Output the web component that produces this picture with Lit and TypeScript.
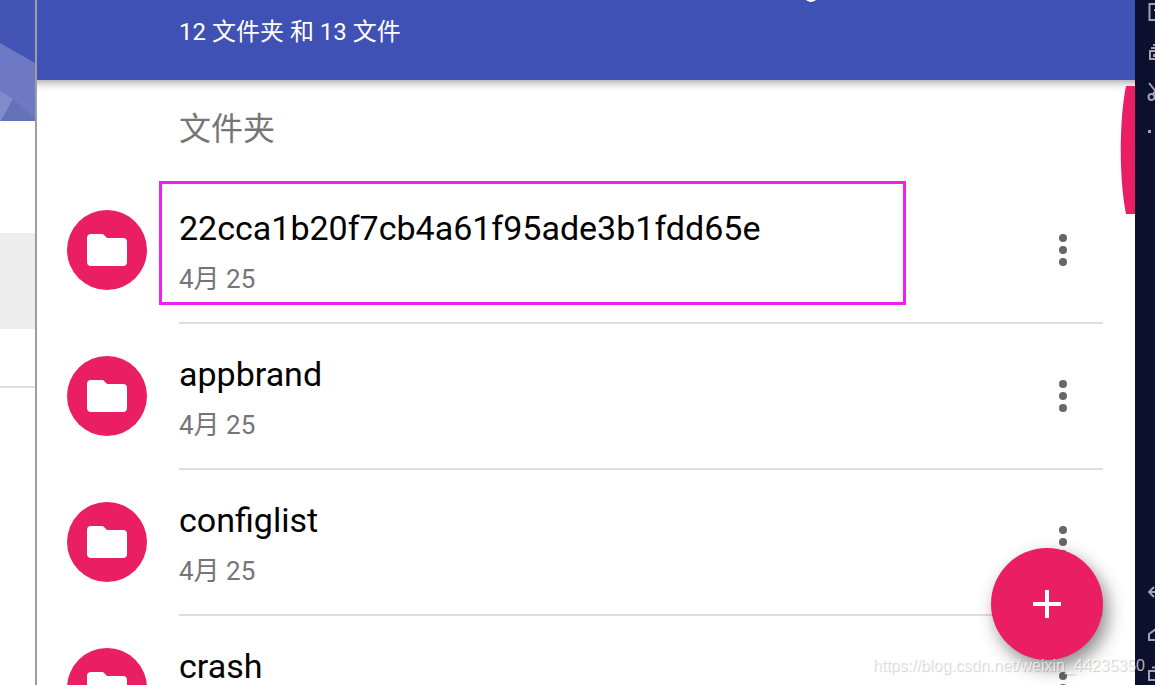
import { LitElement, html, css, svg } from "lit";
import { customElement, property } from "lit/decorators.js";

interface Folder {
  name: string;
  date: string;
  marked?: boolean;
}

const folders: Folder[] = [
  { name: "22cca1b20f7cb4a61f95ade3b1fdd65e", date: "4月 25", marked: true },
  { name: "appbrand", date: "4月 25" },
  { name: "configlist", date: "4月 25" },
  { name: "crash", date: "4月 25" },
];

@customElement("folder-row")
export class FolderRow extends LitElement {
  @property({ attribute: false }) folder!: Folder;

  static styles = css`
    :host {
      display: block;
    }
    .row {
      position: relative;
      display: flex;
      align-items: flex-start;
      padding: 0 32px 0 30px;
    }
    .badge {
      flex: none;
      width: 80px;
      height: 80px;
      margin: 32px 32px 0 0;
      border-radius: 50%;
      background: #e91e63;
    }
    .badge svg,
    .more svg {
      display: block;
    }
    .body {
      flex: 1;
      min-width: 0;
      display: flex;
      border-bottom: 2px solid #dfdfdf;
    }
    .text {
      flex: 1;
      min-width: 0;
      padding: 28px 0 24px;
    }
    .name {
      font-size: 34px;
      line-height: 44px;
      color: #000;
    }
    .date {
      margin-top: 10px;
      font-size: 26px;
      line-height: 38px;
      color: #757575;
    }
    .more {
      flex: none;
      width: 80px;
      padding: 0;
      border: 0;
      background: none;
    }
    .mark {
      position: absolute;
      left: 122px;
      top: 3px;
      width: 68%;
      height: 124px;
      box-sizing: border-box;
      border: 3px solid #f01ef0;
    }
  `;

  render() {
    return html`<div class="row">
      <span class="badge">
        <svg viewBox="0 0 80 80" width="80" height="80" aria-hidden="true">
          <path fill="#fff" d="M36 24H24a4 4 0 0 0-4 4v24a4 4 0 0 0 4 4h32a4 4 0 0 0 4-4V32a4 4 0 0 0-4-4H40z" />
        </svg>
      </span>
      <div class="body">
        <div class="text">
          <div class="name">${this.folder.name}</div>
          <div class="date">${this.folder.date}</div>
        </div>
        <button class="more" aria-label="更多">
          <svg viewBox="0 0 80 144" width="80" height="144" fill="#666">
            <circle cx="40" cy="60" r="4" />
            <circle cx="40" cy="72" r="4" />
            <circle cx="40" cy="84" r="4" />
          </svg>
        </button>
      </div>
      ${this.folder.marked ? html`<span class="mark"></span>` : ""}
    </div>`;
  }
}

const tools = [
  svg`<path d="M24 4H14.500v16H24M19 10h3" />`,
  svg`<path d="M24 51h-9v8h9M16 48h8M18 45h6M19 57v-2h4" />`,
  svg`<path d="M14 83l8 10M18 94l5-6" /><circle cx="16.500" cy="97" r="3" />`,
  svg`<path d="M13 131.500h3" stroke-width="3" />`,
];

@customElement("app-root")
export class AppRoot extends LitElement {
  static styles = css`
    :host {
      position: relative;
      display: flex;
      height: 100vh;
      overflow: hidden;
      background: #fff;
      font-family: Roboto, "Noto Sans CJK SC", sans-serif;
    }
    .drawer {
      flex: none;
      width: 35px;
      border-right: 2px solid #9e9e9e;
    }
    .cover {
      display: block;
      height: 121px;
    }
    .selected {
      height: 96px;
      margin-top: 112px;
      background: #ededed;
    }
    .rule {
      height: 57px;
      border-bottom: 2px solid #dfdfdf;
    }
    .main {
      position: relative;
      flex: 1;
      min-width: 0;
    }
    .bar {
      position: relative;
      padding: 14px 32px 30px 142px;
      overflow: hidden;
      background: #3f51b5;
      color: #fff;
      font-size: 24px;
      line-height: 36px;
    }
    .tail {
      position: absolute;
      left: 768px;
      top: -8px;
      width: 12px;
      height: 10px;
      border-radius: 50%;
      background: #fff;
    }
    .list {
      box-shadow: inset 0 12px 10px -10px rgba(0, 0, 0, 0.4);
    }
    .heading {
      margin: 0;
      padding: 25px 32px 25px 142px;
      font-size: 32px;
      line-height: 48px;
      font-weight: 400;
      color: #757575;
    }
    .thumb {
      position: absolute;
      right: 0;
      top: 86px;
    }
    .side {
      flex: none;
      width: 20px;
      display: flex;
      flex-direction: column;
      justify-content: space-between;
      background: #0d0f2e;
    }
    .side svg {
      display: block;
    }
    .fab {
      position: absolute;
      right: 52px;
      bottom: 25px;
      width: 112px;
      height: 112px;
      padding: 0;
      border: 0;
      border-radius: 50%;
      background: #e91e63;
      box-shadow: 5px 8px 18px rgba(0, 0, 0, 0.45);
    }
    .fab svg {
      display: block;
    }
    .credit {
      position: absolute;
      right: 10px;
      bottom: 9px;
      font: 16px/20px "Liberation Sans", sans-serif;
      color: rgba(255, 255, 255, 0.7);
      text-shadow: 1px 1px 1px rgba(0, 0, 0, 0.2);
    }
  `;

  render() {
    return html`
      <aside class="drawer">
        <svg class="cover" viewBox="0 0 35 121" width="35" height="121" aria-hidden="true">
          <path fill="#4354b4" d="M0 0h35v121H0z" />
          <path fill="#6d79c4" d="M0 43l35 20v58H0z" />
          <path fill="#808bcb" d="M0 91l13 8L1 121H0z" />
          <path fill="#6470b8" d="M13 99l22 20v2H1z" />
        </svg>
        <div class="selected"></div>
        <div class="rule"></div>
      </aside>
      <main class="main">
        <header class="bar"><span class="tail"></span>12 文件夹 和 13 文件</header>
        <section class="list">
          <h2 class="heading">文件夹</h2>
          ${folders.map((f) => html`<folder-row .folder=${f}></folder-row>`)}
        </section>
        <svg class="thumb" viewBox="0 0 15 128" width="15" height="128" aria-hidden="true">
          <path fill="#e91e63" d="M15 0H6C-1 35-1 93 6 128h9z" />
        </svg>
      </main>
      <aside class="side">
        <svg viewBox="0 0 20 140" width="20" height="140" fill="none" stroke="#a2a4b2" stroke-width="2" aria-hidden="true">
          ${tools}
        </svg>
        <svg viewBox="0 0 20 105" width="20" height="105" fill="none" stroke="#a2a4b2" stroke-width="2" aria-hidden="true">
          <path d="M19 7l-5 5 5 5M14 12h6M21 49l-7 5v6h7M21 91h-7v9h7M17 87.500h4" />
        </svg>
      </aside>
      <button class="fab" aria-label="新建">
        <svg viewBox="0 0 112 112" width="112" height="112">
          <path fill="#fff" d="M54 42h4v12h12v4H58v12h-4V58H42v-4h12z" />
        </svg>
      </button>
      <span class="credit">https://blog.csdn.net/weixin_44235350</span>
    `;
  }
}
